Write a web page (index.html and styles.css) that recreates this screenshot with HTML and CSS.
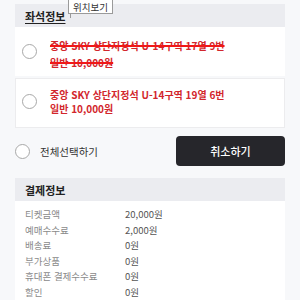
FILE: index.html
```html
<!DOCTYPE html>
<html lang="ko">
<head>
<meta charset="utf-8">
<link rel="stylesheet" href="styles.css">
</head>
<body>
<div class="page">
  <div class="tip">위치보기</div>
  <section class="seat">
    <div class="band"><span class="title underline">좌석정보</span></div>
    <div class="item first">
      <span class="radio"></span>
      <div class="info struck">
        <div class="l1">중앙 SKY 상단지정석 U-14구역 17열 9번</div>
        <div class="l2">일반 10,000원</div>
      </div>
    </div>
    <div class="item second">
      <span class="radio"></span>
      <div class="info">
        <div>중앙 SKY 상단지정석 U-14구역 19열 6번</div>
        <div>일반 10,000원</div>
      </div>
    </div>
  </section>
  <div class="actions">
    <label class="all"><span class="radio"></span>전체선택하기</label>
    <button class="cancel">취소하기</button>
  </div>
  <section class="pay">
    <div class="band"><span class="title">결제정보</span></div>
    <div class="rows">
      <div class="row"><span class="k">티켓금액</span><span class="v">20,000원</span></div>
      <div class="row"><span class="k">예매수수료</span><span class="v">2,000원</span></div>
      <div class="row"><span class="k">배송료</span><span class="v">0원</span></div>
      <div class="row"><span class="k">부가상품</span><span class="v">0원</span></div>
      <div class="row"><span class="k">휴대폰 결제수수료</span><span class="v">0원</span></div>
      <div class="row"><span class="k">할인</span><span class="v">0원</span></div>
    </div>
  </section>
</div>
</body>
</html>
```
FILE: styles.css
```css
html, body {
  margin: 0;
  padding: 0;
  background: #f7f8fa;
  font-family: "Noto Sans CJK KR", "Noto Sans", sans-serif;
  overflow: hidden;
}
.page {
  position: relative;
  padding: 4px 15px 0 15px;
  width: 270px;
}
.tip {
  position: absolute;
  top: 0;
  left: 68px;
  width: 43px;
  height: 11px;
  padding-top: 1.5px;
  background: #fff;
  border: 1px solid #9a9a9a;
  border-top: none;
  font-size: 9.5px;
  line-height: 11px;
  text-align: center;
  color: #333;
  z-index: 2;
}
.tip::after {
  content: "";
  position: absolute;
  left: 1px;
  bottom: -5px;
  width: 1px;
  height: 5px;
  background: #9a9a9a;
}
.band {
  height: 23px;
  background: #ebecf0;
  display: flex;
  align-items: center;
  padding-left: 10px;
}
.title {
  font-size: 11px;
  font-weight: 700;
  color: #222;
}
.underline {
  text-decoration: underline;
  text-underline-offset: 2px;
}
.item {
  background: #fff;
  display: flex;
  align-items: center;
  padding-left: 7px;
  box-sizing: border-box;
}
.item.first {
  height: 49px;
}
.item.second {
  height: 50px;
  margin-top: 2px;
  border: 1px solid #ececee;
  padding-left: 6px;
  padding-bottom: 3px;
}
.radio {
  width: 15px;
  height: 15px;
  border: 1px solid #a8a8a8;
  border-radius: 50%;
  background: #fff;
  box-sizing: border-box;
  flex: none;
}
.info {
  margin-left: 13px;
  font-size: 10px;
  font-weight: 700;
  color: #d2262c;
  line-height: 13.5px;
}
.struck {
  line-height: 17px;
  margin-top: 4px;
}
.struck div {
  text-decoration: line-through;
  text-decoration-color: #f01818;
  text-decoration-thickness: 2px;
}
.actions {
  margin-top: 8px;
  height: 30px;
  display: flex;
  justify-content: space-between;
  align-items: center;
}
.all {
  display: flex;
  align-items: center;
  gap: 10px;
  font-size: 10.5px;
  color: #333;
}
.cancel {
  width: 109px;
  height: 30px;
  border: none;
  border-radius: 4px;
  background: #26262b;
  color: #fff;
  font-family: inherit;
  font-size: 11px;
  font-weight: 500;
  padding: 0;
}
.pay {
  margin-top: 12px;
}
.rows {
  background: #fff;
  padding: 6px 10px 20px 10px;
}
.row {
  display: flex;
  height: 15.5px;
  line-height: 15.5px;
  font-size: 9.5px;
}
.k {
  width: 100px;
  color: #8a8a8a;
}
.v {
  color: #555;
}
```
